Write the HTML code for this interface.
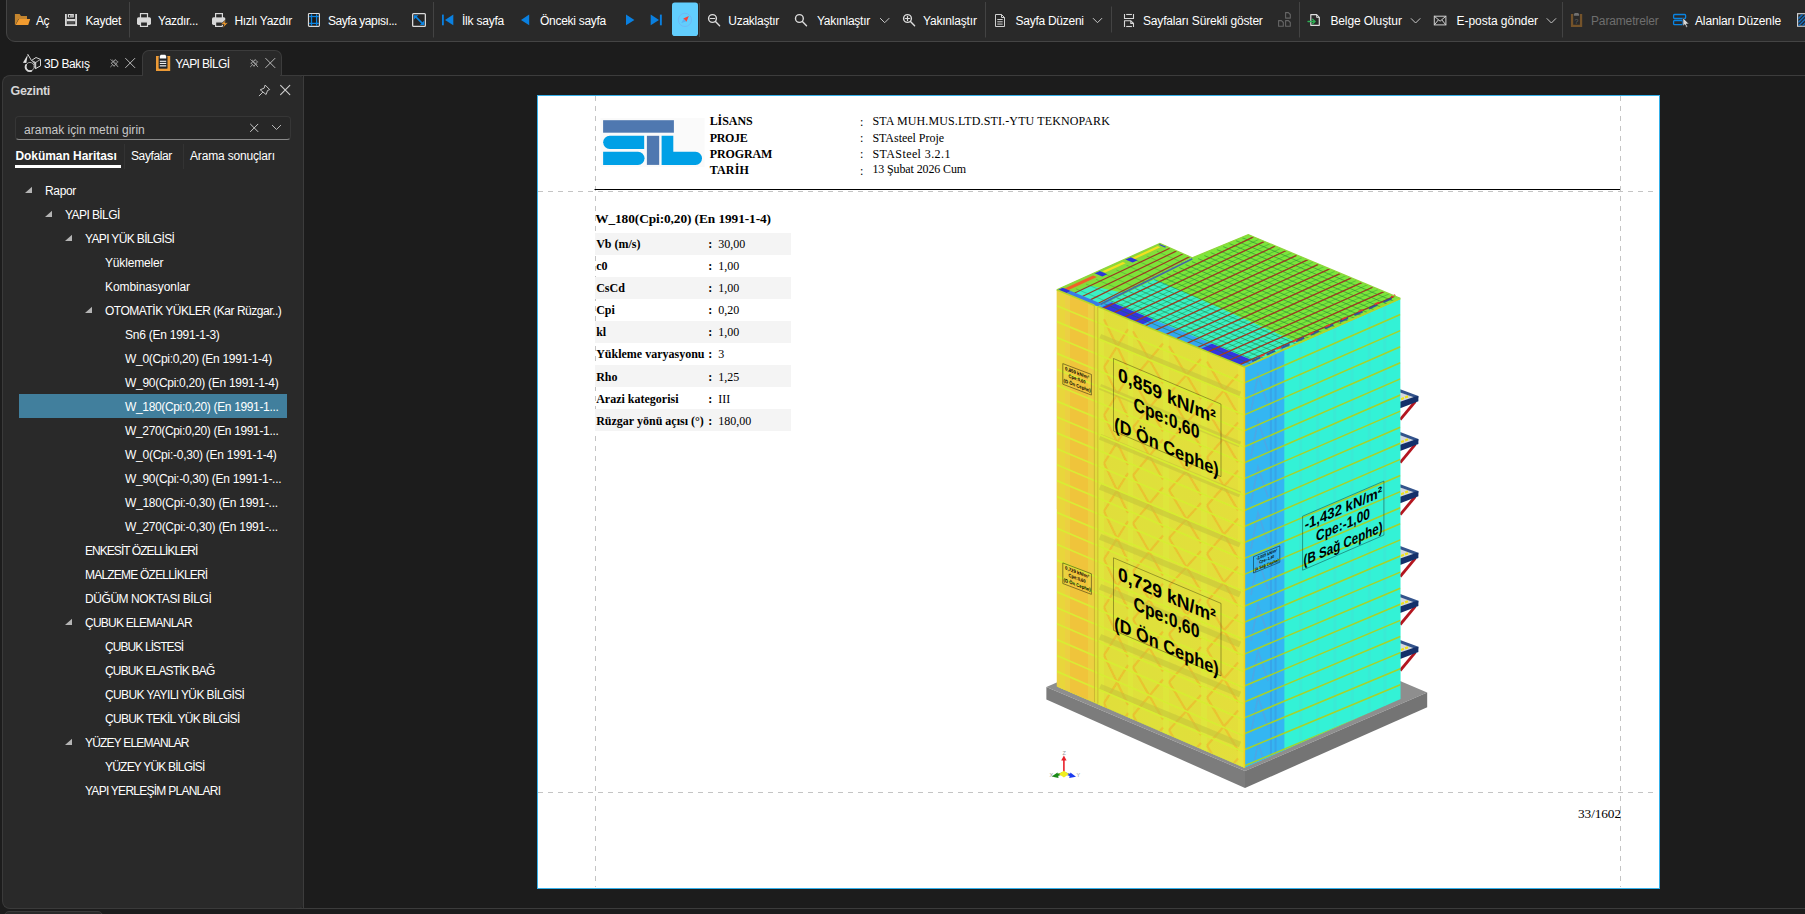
<!DOCTYPE html>
<html lang="tr"><head><meta charset="utf-8"><title>YAPI BİLGİ</title>
<style>
html,body{margin:0;padding:0;}
body{width:1805px;height:914px;overflow:hidden;background:#1c1c1c;position:relative;font-family:"Liberation Sans",sans-serif;}
.t{position:absolute;white-space:pre;}
.f{font-family:"Liberation Sans",sans-serif;}
.r{font-family:"Liberation Serif",serif;}
.a{position:absolute;}
svg{position:absolute;overflow:visible;}

</style></head>
<body>
<!-- toolbar -->
<div class="a" style="left:6px;top:-10px;width:1830px;height:49.8px;background:#292929;border:1px solid #444;border-radius:9px;"></div>
<!-- toolbar separators -->
<!-- tab strip -->
<div class="a" style="left:142px;top:50px;width:138px;height:27px;background:#292929;border:1px solid #3c3c3c;border-bottom:none;border-radius:7px 7px 0 0;"></div>
<!-- doc area top line -->
<div class="a" style="left:281px;top:75px;width:1530px;height:1px;background:#3c3c3c;"></div>
<!-- left panel -->
<div class="a" style="left:2px;top:75px;width:300.5px;height:834px;background:#292929;border:1px solid #3a3a3a;border-right-color:#292929;border-radius:8px 4px 4px 8px;box-sizing:border-box;"></div>
<div class="a tabcover" style="left:143px;top:74px;width:137px;height:3px;background:#292929;"></div>
<div class="a" style="left:303px;top:75px;width:1px;height:834px;background:#3c3c3c;"></div>
<!-- bottom line -->
<div class="a" style="left:296px;top:908px;width:1510px;height:1px;background:#3c3c3c;"></div>
<div class="a" style="left:4px;top:911px;width:98.5px;height:10px;background:#292929;border:1px solid #3a3a3a;border-radius:5px 5px 0 0;box-sizing:border-box;"></div>
<!-- search box -->
<div class="a" style="left:15px;top:116px;width:276px;height:24px;background:#272727;border:1px solid #363636;border-bottom-color:#8a8a8a;border-radius:4px;box-sizing:border-box;"></div>
<!-- panel tabs underline -->
<div class="a" style="left:15px;top:165px;width:106px;height:3px;background:#fff;"></div>
<div class="a" style="left:124px;top:144px;width:1px;height:25px;background:#333;"></div>
<div class="a" style="left:183px;top:144px;width:1px;height:25px;background:#333;"></div>
<!-- selected row -->
<div class="a" style="left:19px;top:394px;width:268px;height:24px;background:#417f9d;"></div>
<!-- page -->
<div class="a" style="left:537px;top:94.5px;width:1122.5px;height:794.5px;background:#fff;border:1px solid #35b0ea;box-sizing:border-box;"></div>
<!-- page guides -->
<svg class="a" style="left:0;top:0;" width="1805" height="914">
  <g stroke="#c4c4c4" stroke-width="1" stroke-dasharray="5 5" fill="none">
    <line x1="595.5" y1="96" x2="595.5" y2="887"/>
    <line x1="1620.5" y1="96" x2="1620.5" y2="887"/>
    <line x1="538" y1="191.5" x2="1658" y2="191.5"/>
    <line x1="538" y1="792.5" x2="1658" y2="792.5"/>
  </g>
  <line x1="594.5" y1="189.5" x2="1620" y2="189.5" stroke="#000" stroke-width="1.15"/>
  <!-- logo -->
  <rect x="600.5" y="118" width="104" height="49" fill="#fafafa"/>
  <rect x="603.1" y="120.2" width="70.8" height="12.5" fill="#4f78b0"/>
  <path d="M609.7 135.8H644.2V148.9H609.7A6.55 6.55 0 0 1 609.7 135.8Z" fill="#00a0e6"/>
  <path d="M603.1 151.8H638A6.55 6.55 0 0 1 638 164.9H603.1Z" fill="#00a0e6"/>
  <rect x="646.9" y="135.8" width="12.3" height="29.1" fill="#4f78b0"/>
  <path d="M661.6 135.8H673.3V151.8H695.5A6.55 6.55 0 0 1 695.5 164.9H661.6Z" fill="#00a0e6"/>
</svg>
<!-- table stripes -->
<div class="a" style="left:595px;top:232.9px;width:196px;height:21.8px;background:#f4f4f4;"></div>
<div class="a" style="left:595px;top:277.0px;width:196px;height:21.8px;background:#f4f4f4;"></div>
<div class="a" style="left:595px;top:321.0px;width:196px;height:21.8px;background:#f4f4f4;"></div>
<div class="a" style="left:595px;top:365.1px;width:196px;height:21.8px;background:#f4f4f4;"></div>
<div class="a" style="left:595px;top:409.1px;width:196px;height:21.8px;background:#f4f4f4;"></div>

<svg class="a" style="left:0;top:0;" width="1805" height="914">
<defs><linearGradient id="gl" x1="0" x2="1" y1="0" y2="0"><stop offset="0" stop-color="#e2dc3f"/><stop offset="0.5" stop-color="#dfe03c"/><stop offset="1" stop-color="#e4de3e"/></linearGradient><clipPath id="cl"><polygon points="1056.8,289.8 1244.4,367.0 1244.4,767.8 1056.9,686.4"/></clipPath><clipPath id="cr"><polygon points="1244.4,367.0 1400.3,298.4 1400.6,699.0 1244.4,767.8"/></clipPath><clipPath id="croof"><polygon points="1097.8,306.6 1192.3,257.8 1248.3,234.6 1400.3,298.4 1244.4,367.0"/></clipPath><clipPath id="croof2"><polygon points="1056.8,289.8 1159.9,243.4 1192.3,257.8 1097.8,306.6"/></clipPath></defs>
<polygon points="1046.4,686.9 1245.0,771.0 1427.2,692.6 1228.0,608.0" fill="#8e8e8e"/>
<polygon points="1046.4,686.9 1245.0,771.0 1245.0,788.0 1046.4,699.6" fill="#7c7c7c"/>
<polygon points="1245.0,771.0 1427.2,692.6 1427.2,707.2 1245.0,788.0" fill="#747474"/>
<path d="M1415.3 401.5L1400.2 419.7" stroke="#b3161f" stroke-width="2.8"/>
<polygon points="1400.2,392.2 1414.5,397.2 1400.2,402.2" fill="#d4d8e0"/>
<path d="M1401 399.2L1409.5 395.8" stroke="#efe11c" stroke-width="2.2" stroke-dasharray="3.2 1.2"/>
<polygon points="1400.2,389.2 1418.4,396.0 1418.4,397.8 1414.5,397.6 1400.2,392.4" fill="#34548c"/>
<polygon points="1400.2,401.8 1414.5,396.8 1418.4,396.0 1418.4,401.2 1400.2,408.2" fill="#14306a"/>
<path d="M1415.3 444.4L1400.2 462.6" stroke="#b3161f" stroke-width="2.8"/>
<polygon points="1400.2,435.1 1414.5,440.1 1400.2,445.1" fill="#d4d8e0"/>
<path d="M1401 442.1L1409.5 438.7" stroke="#efe11c" stroke-width="2.2" stroke-dasharray="3.2 1.2"/>
<polygon points="1400.2,432.1 1418.4,438.9 1418.4,440.7 1414.5,440.5 1400.2,435.3" fill="#34548c"/>
<polygon points="1400.2,444.7 1414.5,439.7 1418.4,438.9 1418.4,444.1 1400.2,451.1" fill="#14306a"/>
<path d="M1415.3 496.5L1400.2 514.7" stroke="#b3161f" stroke-width="2.8"/>
<polygon points="1400.2,487.2 1414.5,492.2 1400.2,497.2" fill="#d4d8e0"/>
<path d="M1401 494.2L1409.5 490.8" stroke="#efe11c" stroke-width="2.2" stroke-dasharray="3.2 1.2"/>
<polygon points="1400.2,484.2 1418.4,491.0 1418.4,492.8 1414.5,492.6 1400.2,487.4" fill="#34548c"/>
<polygon points="1400.2,496.8 1414.5,491.8 1418.4,491.0 1418.4,496.2 1400.2,503.2" fill="#14306a"/>
<path d="M1415.3 558.3L1400.2 576.5" stroke="#b3161f" stroke-width="2.8"/>
<polygon points="1400.2,549.0 1414.5,554.0 1400.2,559.0" fill="#d4d8e0"/>
<path d="M1401 556.0L1409.5 552.6" stroke="#efe11c" stroke-width="2.2" stroke-dasharray="3.2 1.2"/>
<polygon points="1400.2,546.0 1418.4,552.8 1418.4,554.6 1414.5,554.4 1400.2,549.2" fill="#34548c"/>
<polygon points="1400.2,558.6 1414.5,553.6 1418.4,552.8 1418.4,558.0 1400.2,565.0" fill="#14306a"/>
<path d="M1415.3 606.3L1400.2 624.5" stroke="#b3161f" stroke-width="2.8"/>
<polygon points="1400.2,597.0 1414.5,602.0 1400.2,607.0" fill="#d4d8e0"/>
<path d="M1401 604.0L1409.5 600.6" stroke="#efe11c" stroke-width="2.2" stroke-dasharray="3.2 1.2"/>
<polygon points="1400.2,594.0 1418.4,600.8 1418.4,602.6 1414.5,602.4 1400.2,597.2" fill="#34548c"/>
<polygon points="1400.2,606.6 1414.5,601.6 1418.4,600.8 1418.4,606.0 1400.2,613.0" fill="#14306a"/>
<path d="M1415.3 652.3L1400.2 670.5" stroke="#b3161f" stroke-width="2.8"/>
<polygon points="1400.2,643.0 1414.5,648.0 1400.2,653.0" fill="#d4d8e0"/>
<path d="M1401 650.0L1409.5 646.6" stroke="#efe11c" stroke-width="2.2" stroke-dasharray="3.2 1.2"/>
<polygon points="1400.2,640.0 1418.4,646.8 1418.4,648.6 1414.5,648.4 1400.2,643.2" fill="#34548c"/>
<polygon points="1400.2,652.6 1414.5,647.6 1418.4,646.8 1418.4,652.0 1400.2,659.0" fill="#14306a"/>
<polygon points="1056.8,289.8 1244.4,367.0 1244.4,767.8 1056.9,686.4" fill="url(#gl)"/>
<polygon points="1056.8,289.8 1094.3,305.2 1094.5,702.2 1056.9,686.4" fill="#ecd046"/>
<g clip-path="url(#cl)">
<rect x="1060" y="280" width="5" height="500" fill="#e8d83c" opacity="0.75"/>
<rect x="1098" y="280" width="6" height="500" fill="#dde843" opacity="0.75"/>
<rect x="1128" y="280" width="5" height="500" fill="#dde843" opacity="0.75"/>
<rect x="1163" y="280" width="6" height="500" fill="#dde843" opacity="0.75"/>
<rect x="1201" y="280" width="6" height="500" fill="#dde843" opacity="0.75"/>
<rect x="1238" y="280" width="6" height="500" fill="#e6e63c" opacity="0.75"/>
<rect x="1070" y="280" width="18" height="500" fill="#f2c23c" opacity="0.75"/>
<path d="M1104 319.2L1128 369.1M1128 329.1L1104 367.2" stroke="#f0b030" stroke-width="2.2" opacity="0.55" fill="none"/>
<path d="M1104 367.2L1128 417.1M1128 377.1L1104 415.2" stroke="#f0b030" stroke-width="2.2" opacity="0.55" fill="none"/>
<path d="M1104 415.2L1128 465.1M1128 425.1L1104 463.2" stroke="#f0b030" stroke-width="2.2" opacity="0.55" fill="none"/>
<path d="M1104 463.2L1128 513.1M1128 473.1L1104 511.2" stroke="#f0b030" stroke-width="2.2" opacity="0.55" fill="none"/>
<path d="M1104 511.2L1128 561.1M1128 521.1L1104 559.2" stroke="#f0b030" stroke-width="2.2" opacity="0.55" fill="none"/>
<path d="M1104 559.2L1128 609.1M1128 569.1L1104 607.2" stroke="#f0b030" stroke-width="2.2" opacity="0.55" fill="none"/>
<path d="M1104 607.2L1128 657.1M1128 617.1L1104 655.2" stroke="#f0b030" stroke-width="2.2" opacity="0.55" fill="none"/>
<path d="M1104 655.2L1128 705.1M1128 665.1L1104 703.2" stroke="#f0b030" stroke-width="2.2" opacity="0.55" fill="none"/>
<path d="M1104 703.2L1128 753.1M1128 713.1L1104 751.2" stroke="#f0b030" stroke-width="2.2" opacity="0.55" fill="none"/>
<path d="M1133 331.2L1163 383.5M1163 343.5L1133 379.2" stroke="#f0b030" stroke-width="2.2" opacity="0.55" fill="none"/>
<path d="M1133 379.2L1163 431.5M1163 391.5L1133 427.2" stroke="#f0b030" stroke-width="2.2" opacity="0.55" fill="none"/>
<path d="M1133 427.2L1163 479.5M1163 439.5L1133 475.2" stroke="#f0b030" stroke-width="2.2" opacity="0.55" fill="none"/>
<path d="M1133 475.2L1163 527.5M1163 487.5L1133 523.2" stroke="#f0b030" stroke-width="2.2" opacity="0.55" fill="none"/>
<path d="M1133 523.2L1163 575.5M1163 535.5L1133 571.2" stroke="#f0b030" stroke-width="2.2" opacity="0.55" fill="none"/>
<path d="M1133 571.2L1163 623.5M1163 583.5L1133 619.2" stroke="#f0b030" stroke-width="2.2" opacity="0.55" fill="none"/>
<path d="M1133 619.2L1163 671.5M1163 631.5L1133 667.2" stroke="#f0b030" stroke-width="2.2" opacity="0.55" fill="none"/>
<path d="M1133 667.2L1163 719.5M1163 679.5L1133 715.2" stroke="#f0b030" stroke-width="2.2" opacity="0.55" fill="none"/>
<path d="M1133 715.2L1163 767.5M1163 727.5L1133 763.2" stroke="#f0b030" stroke-width="2.2" opacity="0.55" fill="none"/>
<path d="M1169 346.0L1201 399.1M1201 359.1L1169 394.0" stroke="#f0b030" stroke-width="2.2" opacity="0.55" fill="none"/>
<path d="M1169 394.0L1201 447.1M1201 407.1L1169 442.0" stroke="#f0b030" stroke-width="2.2" opacity="0.55" fill="none"/>
<path d="M1169 442.0L1201 495.1M1201 455.1L1169 490.0" stroke="#f0b030" stroke-width="2.2" opacity="0.55" fill="none"/>
<path d="M1169 490.0L1201 543.1M1201 503.1L1169 538.0" stroke="#f0b030" stroke-width="2.2" opacity="0.55" fill="none"/>
<path d="M1169 538.0L1201 591.1M1201 551.1L1169 586.0" stroke="#f0b030" stroke-width="2.2" opacity="0.55" fill="none"/>
<path d="M1169 586.0L1201 639.1M1201 599.1L1169 634.0" stroke="#f0b030" stroke-width="2.2" opacity="0.55" fill="none"/>
<path d="M1169 634.0L1201 687.1M1201 647.1L1169 682.0" stroke="#f0b030" stroke-width="2.2" opacity="0.55" fill="none"/>
<path d="M1169 682.0L1201 735.1M1201 695.1L1169 730.0" stroke="#f0b030" stroke-width="2.2" opacity="0.55" fill="none"/>
<path d="M1169 730.0L1201 783.1M1201 743.1L1169 778.0" stroke="#f0b030" stroke-width="2.2" opacity="0.55" fill="none"/>
<path d="M1207 361.6L1238 414.4M1238 374.4L1207 409.6" stroke="#f0b030" stroke-width="2.2" opacity="0.55" fill="none"/>
<path d="M1207 409.6L1238 462.4M1238 422.4L1207 457.6" stroke="#f0b030" stroke-width="2.2" opacity="0.55" fill="none"/>
<path d="M1207 457.6L1238 510.4M1238 470.4L1207 505.6" stroke="#f0b030" stroke-width="2.2" opacity="0.55" fill="none"/>
<path d="M1207 505.6L1238 558.4M1238 518.4L1207 553.6" stroke="#f0b030" stroke-width="2.2" opacity="0.55" fill="none"/>
<path d="M1207 553.6L1238 606.4M1238 566.4L1207 601.6" stroke="#f0b030" stroke-width="2.2" opacity="0.55" fill="none"/>
<path d="M1207 601.6L1238 654.4M1238 614.4L1207 649.6" stroke="#f0b030" stroke-width="2.2" opacity="0.55" fill="none"/>
<path d="M1207 649.6L1238 702.4M1238 662.4L1207 697.6" stroke="#f0b030" stroke-width="2.2" opacity="0.55" fill="none"/>
<path d="M1207 697.6L1238 750.4M1238 710.4L1207 745.6" stroke="#f0b030" stroke-width="2.2" opacity="0.55" fill="none"/>
<path d="M1207 745.6L1238 798.4M1238 758.4L1207 793.6" stroke="#f0b030" stroke-width="2.2" opacity="0.55" fill="none"/>
<path d="M1100 336.8L1240 394.4" stroke="#c4c23a" stroke-width="6" opacity="0.55"/>
<path d="M1100 386.8L1240 444.4" stroke="#c4c23a" stroke-width="6" opacity="0.55"/>
<path d="M1100 436.8L1240 494.4" stroke="#c4c23a" stroke-width="6" opacity="0.55"/>
<path d="M1100 486.8L1240 544.4" stroke="#c4c23a" stroke-width="6" opacity="0.55"/>
<path d="M1100 536.8L1240 594.4" stroke="#c4c23a" stroke-width="6" opacity="0.55"/>
<path d="M1100 586.8L1240 644.4" stroke="#c4c23a" stroke-width="6" opacity="0.55"/>
<path d="M1100 636.8L1240 694.4" stroke="#c4c23a" stroke-width="6" opacity="0.55"/>
<path d="M1100 686.8L1240 744.4" stroke="#c4c23a" stroke-width="6" opacity="0.55"/>
<path d="M1056.8 289.8L1244.4 367.0" stroke="#d8ee34" stroke-width="1.7" opacity="0.95"/>
<path d="M1056.8 305.7L1244.4 383.1" stroke="#d8ee34" stroke-width="1.7" opacity="0.95"/>
<path d="M1056.8 321.6L1244.4 399.1" stroke="#d8ee34" stroke-width="1.7" opacity="0.95"/>
<path d="M1056.8 337.5L1244.4 415.1" stroke="#d8ee34" stroke-width="1.7" opacity="0.95"/>
<path d="M1056.8 353.4L1244.4 431.2" stroke="#d8ee34" stroke-width="1.7" opacity="0.95"/>
<path d="M1056.8 369.3L1244.4 447.2" stroke="#d8ee34" stroke-width="1.7" opacity="0.95"/>
<path d="M1056.8 385.2L1244.4 463.3" stroke="#d8ee34" stroke-width="1.7" opacity="0.95"/>
<path d="M1056.8 401.1L1244.4 479.4" stroke="#d8ee34" stroke-width="1.7" opacity="0.95"/>
<path d="M1056.8 417.0L1244.4 495.4" stroke="#d8ee34" stroke-width="1.7" opacity="0.95"/>
<path d="M1056.8 432.9L1244.4 511.5" stroke="#d8ee34" stroke-width="1.7" opacity="0.95"/>
<path d="M1056.8 448.8L1244.4 527.5" stroke="#d8ee34" stroke-width="1.7" opacity="0.95"/>
<path d="M1056.8 464.7L1244.4 543.5" stroke="#d8ee34" stroke-width="1.7" opacity="0.95"/>
<path d="M1056.8 480.6L1244.4 559.6" stroke="#d8ee34" stroke-width="1.7" opacity="0.95"/>
<path d="M1056.8 496.5L1244.4 575.6" stroke="#d8ee34" stroke-width="1.7" opacity="0.95"/>
<path d="M1056.8 512.4L1244.4 591.7" stroke="#d8ee34" stroke-width="1.7" opacity="0.95"/>
<path d="M1056.8 528.3L1244.4 607.8" stroke="#d8ee34" stroke-width="1.7" opacity="0.95"/>
<path d="M1056.8 544.2L1244.4 623.8" stroke="#d8ee34" stroke-width="1.7" opacity="0.95"/>
<path d="M1056.8 560.1L1244.4 639.9" stroke="#d8ee34" stroke-width="1.7" opacity="0.95"/>
<path d="M1056.8 576.0L1244.4 655.9" stroke="#d8ee34" stroke-width="1.7" opacity="0.95"/>
<path d="M1056.8 591.9L1244.4 672.0" stroke="#d8ee34" stroke-width="1.7" opacity="0.95"/>
<path d="M1056.8 607.8L1244.4 688.0" stroke="#d8ee34" stroke-width="1.7" opacity="0.95"/>
<path d="M1056.8 623.7L1244.4 704.0" stroke="#d8ee34" stroke-width="1.7" opacity="0.95"/>
<path d="M1056.8 639.6L1244.4 720.1" stroke="#d8ee34" stroke-width="1.7" opacity="0.95"/>
<path d="M1056.8 655.5L1244.4 736.2" stroke="#d8ee34" stroke-width="1.7" opacity="0.95"/>
<path d="M1056.8 671.4L1244.4 752.2" stroke="#d8ee34" stroke-width="1.7" opacity="0.95"/>
<path d="M1056.8 687.3L1244.4 768.2" stroke="#d8ee34" stroke-width="1.7" opacity="0.95"/>
</g>
<path d="M1094.3 305.2L1094.5 702.2M1097.8 306.6L1097.9 703.6" stroke="#c8b030" stroke-width="0.8"/>
<polygon points="1244.4,367.0 1400.3,298.4 1400.6,699.0 1244.4,767.8" fill="#33f2d6"/>
<polygon points="1244.4,367.0 1284.3,349.4 1284.4,750.2 1244.4,767.8" fill="#34b6f2"/>
<g clip-path="url(#cr)">
<path d="M1270.9 355.3L1271.0 756.1" stroke="#3a9fe6" stroke-width="2" opacity="0.7"/>
<path d="M1275.6 353.3L1275.6 754.0" stroke="#3a9fe6" stroke-width="2" opacity="0.7"/>
<path d="M1300.5 342.3L1300.6 743.0" stroke="#3fe6d4" stroke-width="3" opacity="0.6"/>
<path d="M1317.7 334.8L1317.8 735.5" stroke="#3fe6d4" stroke-width="3" opacity="0.6"/>
<path d="M1334.8 327.2L1335.0 727.9" stroke="#3fe6d4" stroke-width="3" opacity="0.6"/>
<path d="M1352.0 319.7L1352.2 720.3" stroke="#3fe6d4" stroke-width="3" opacity="0.6"/>
<path d="M1369.1 312.1L1369.4 712.8" stroke="#3fe6d4" stroke-width="3" opacity="0.6"/>
<path d="M1384.7 305.3L1385.0 705.9" stroke="#3fe6d4" stroke-width="3" opacity="0.6"/>
<path d="M1251 411.0L1258 375.0L1268 405.0" stroke="#5a9fe0" stroke-width="1.6" opacity="0.6" fill="none"/>
<path d="M1251 457.0L1258 421.0L1268 451.0" stroke="#5a9fe0" stroke-width="1.6" opacity="0.6" fill="none"/>
<path d="M1251 503.0L1258 467.0L1268 497.0" stroke="#5a9fe0" stroke-width="1.6" opacity="0.6" fill="none"/>
<path d="M1251 549.0L1258 513.0L1268 543.0" stroke="#5a9fe0" stroke-width="1.6" opacity="0.6" fill="none"/>
<path d="M1251 595.0L1258 559.0L1268 589.0" stroke="#5a9fe0" stroke-width="1.6" opacity="0.6" fill="none"/>
<path d="M1251 641.0L1258 605.0L1268 635.0" stroke="#5a9fe0" stroke-width="1.6" opacity="0.6" fill="none"/>
<path d="M1251 687.0L1258 651.0L1268 681.0" stroke="#5a9fe0" stroke-width="1.6" opacity="0.6" fill="none"/>
<path d="M1251 733.0L1258 697.0L1268 727.0" stroke="#5a9fe0" stroke-width="1.6" opacity="0.6" fill="none"/>
<path d="M1251 779.0L1258 743.0L1268 773.0" stroke="#5a9fe0" stroke-width="1.6" opacity="0.6" fill="none"/>
<path d="M1244.4 367.0L1400.3 298.4" stroke="#a6d22a" stroke-width="1.5"/>
<path d="M1244.4 382.9L1400.3 314.5" stroke="#a6d22a" stroke-width="1.5"/>
<path d="M1244.4 398.9L1400.3 330.6" stroke="#a6d22a" stroke-width="1.5"/>
<path d="M1244.4 414.9L1400.3 346.7" stroke="#a6d22a" stroke-width="1.5"/>
<path d="M1244.4 430.8L1400.3 362.8" stroke="#a6d22a" stroke-width="1.5"/>
<path d="M1244.4 446.8L1400.3 378.9" stroke="#a6d22a" stroke-width="1.5"/>
<path d="M1244.4 462.7L1400.3 395.0" stroke="#a6d22a" stroke-width="1.5"/>
<path d="M1244.4 478.6L1400.3 411.1" stroke="#a6d22a" stroke-width="1.5"/>
<path d="M1244.4 494.6L1400.3 427.2" stroke="#a6d22a" stroke-width="1.5"/>
<path d="M1244.4 510.5L1400.3 443.3" stroke="#a6d22a" stroke-width="1.5"/>
<path d="M1244.4 526.5L1400.3 459.4" stroke="#a6d22a" stroke-width="1.5"/>
<path d="M1244.4 542.5L1400.3 475.5" stroke="#a6d22a" stroke-width="1.5"/>
<path d="M1244.4 558.4L1400.3 491.6" stroke="#a6d22a" stroke-width="1.5"/>
<path d="M1244.4 574.4L1400.3 507.7" stroke="#a6d22a" stroke-width="1.5"/>
<path d="M1244.4 590.3L1400.3 523.8" stroke="#a6d22a" stroke-width="1.5"/>
<path d="M1244.4 606.2L1400.3 539.9" stroke="#a6d22a" stroke-width="1.5"/>
<path d="M1244.4 622.2L1400.3 556.0" stroke="#a6d22a" stroke-width="1.5"/>
<path d="M1244.4 638.1L1400.3 572.1" stroke="#a6d22a" stroke-width="1.5"/>
<path d="M1244.4 654.1L1400.3 588.2" stroke="#a6d22a" stroke-width="1.5"/>
<path d="M1244.4 670.0L1400.3 604.3" stroke="#a6d22a" stroke-width="1.5"/>
<path d="M1244.4 686.0L1400.3 620.4" stroke="#a6d22a" stroke-width="1.5"/>
<path d="M1244.4 702.0L1400.3 636.5" stroke="#a6d22a" stroke-width="1.5"/>
<path d="M1244.4 717.9L1400.3 652.6" stroke="#a6d22a" stroke-width="1.5"/>
<path d="M1244.4 733.8L1400.3 668.7" stroke="#a6d22a" stroke-width="1.5"/>
<path d="M1244.4 749.8L1400.3 684.8" stroke="#a6d22a" stroke-width="1.5"/>
<path d="M1244.4 765.8L1400.3 700.9" stroke="#a6d22a" stroke-width="1.5"/>
</g>
<path d="M1244.4 367.0L1244.4 767.8" stroke="#f0d020" stroke-width="1.6"/>
<polygon points="1056.8,289.8 1159.9,243.4 1192.3,257.8 1097.8,306.6" fill="#7fe23a"/>
<polygon points="1097.8,306.6 1192.3,257.8 1248.3,234.6 1400.3,298.4 1244.4,367.0" fill="#7ee63c"/>
<g clip-path="url(#croof)">
<polygon points="1097.8,306.6 1244.4,367.0 1299.0,343.0 1155.0,279.2" fill="#3cf0c4"/>
<polygon points="1097.8,306.6 1244.4,367.0 1256.1,361.9 1109.1,301.2" fill="#35a6f0"/>
<polygon points="1100.7,307.8 1141.8,324.7 1153.2,319.4 1112.0,302.4" fill="#3434e0"/>
<polygon points="1200.4,348.9 1240.0,365.2 1251.7,360.0 1212.0,343.7" fill="#3434e0"/>
<path d="M1104.1 303.6L1250.9 364.1" stroke="#1f7a3a" stroke-width="0.7" opacity="0.75"/>
<path d="M1110.3 300.6L1257.4 361.3" stroke="#1f7a3a" stroke-width="0.7" opacity="0.75"/>
<path d="M1116.6 297.6L1263.9 358.4" stroke="#1f7a3a" stroke-width="0.7" opacity="0.75"/>
<path d="M1122.9 294.6L1270.4 355.6" stroke="#1f7a3a" stroke-width="0.7" opacity="0.75"/>
<path d="M1129.2 291.6L1276.9 352.7" stroke="#1f7a3a" stroke-width="0.7" opacity="0.75"/>
<path d="M1135.4 288.6L1283.4 349.9" stroke="#1f7a3a" stroke-width="0.7" opacity="0.75"/>
<path d="M1141.7 285.6L1289.9 347.0" stroke="#1f7a3a" stroke-width="0.7" opacity="0.75"/>
<path d="M1148.0 282.6L1296.4 344.1" stroke="#1f7a3a" stroke-width="0.7" opacity="0.75"/>
<path d="M1154.2 279.6L1302.9 341.3" stroke="#1f7a3a" stroke-width="0.7" opacity="0.75"/>
<path d="M1160.5 276.6L1309.4 338.4" stroke="#1f7a3a" stroke-width="0.7" opacity="0.75"/>
<path d="M1166.8 273.6L1315.9 335.6" stroke="#1f7a3a" stroke-width="0.7" opacity="0.75"/>
<path d="M1173.0 270.6L1322.3 332.7" stroke="#1f7a3a" stroke-width="0.7" opacity="0.75"/>
<path d="M1179.3 267.6L1328.8 329.8" stroke="#1f7a3a" stroke-width="0.7" opacity="0.75"/>
<path d="M1185.6 264.6L1335.3 327.0" stroke="#1f7a3a" stroke-width="0.7" opacity="0.75"/>
<path d="M1191.9 261.6L1341.8 324.1" stroke="#1f7a3a" stroke-width="0.7" opacity="0.75"/>
<path d="M1198.1 258.6L1348.3 321.3" stroke="#1f7a3a" stroke-width="0.7" opacity="0.75"/>
<path d="M1204.4 255.6L1354.8 318.4" stroke="#1f7a3a" stroke-width="0.7" opacity="0.75"/>
<path d="M1210.7 252.6L1361.3 315.5" stroke="#1f7a3a" stroke-width="0.7" opacity="0.75"/>
<path d="M1216.9 249.6L1367.8 312.7" stroke="#1f7a3a" stroke-width="0.7" opacity="0.75"/>
<path d="M1223.2 246.6L1374.3 309.8" stroke="#1f7a3a" stroke-width="0.7" opacity="0.75"/>
<path d="M1229.5 243.6L1380.8 307.0" stroke="#1f7a3a" stroke-width="0.7" opacity="0.75"/>
<path d="M1235.8 240.6L1387.3 304.1" stroke="#1f7a3a" stroke-width="0.7" opacity="0.75"/>
<path d="M1242.0 237.6L1393.8 301.3" stroke="#1f7a3a" stroke-width="0.7" opacity="0.75"/>
<path d="M1115.1 303.0L1253.7 236.9" stroke="#1f7a3a" stroke-width="0.6" opacity="0.6"/>
<path d="M1120.3 305.2L1259.2 239.2" stroke="#1f7a3a" stroke-width="0.6" opacity="0.6"/>
<path d="M1125.6 307.3L1264.6 241.4" stroke="#1f7a3a" stroke-width="0.6" opacity="0.6"/>
<path d="M1130.8 309.5L1270.0 243.7" stroke="#1f7a3a" stroke-width="0.6" opacity="0.6"/>
<path d="M1136.1 311.7L1275.4 246.0" stroke="#1f7a3a" stroke-width="0.6" opacity="0.6"/>
<path d="M1141.3 313.8L1280.9 248.3" stroke="#1f7a3a" stroke-width="0.6" opacity="0.6"/>
<path d="M1146.6 316.0L1286.3 250.5" stroke="#1f7a3a" stroke-width="0.6" opacity="0.6"/>
<path d="M1151.8 318.2L1291.7 252.8" stroke="#1f7a3a" stroke-width="0.6" opacity="0.6"/>
<path d="M1157.1 320.3L1297.2 255.1" stroke="#1f7a3a" stroke-width="0.6" opacity="0.6"/>
<path d="M1162.4 322.5L1302.6 257.4" stroke="#1f7a3a" stroke-width="0.6" opacity="0.6"/>
<path d="M1167.6 324.7L1308.0 259.7" stroke="#1f7a3a" stroke-width="0.6" opacity="0.6"/>
<path d="M1172.9 326.8L1313.4 261.9" stroke="#1f7a3a" stroke-width="0.6" opacity="0.6"/>
<path d="M1178.1 329.0L1318.9 264.2" stroke="#1f7a3a" stroke-width="0.6" opacity="0.6"/>
<path d="M1183.4 331.2L1324.3 266.5" stroke="#1f7a3a" stroke-width="0.6" opacity="0.6"/>
<path d="M1188.6 333.3L1329.7 268.8" stroke="#1f7a3a" stroke-width="0.6" opacity="0.6"/>
<path d="M1193.9 335.5L1335.2 271.1" stroke="#1f7a3a" stroke-width="0.6" opacity="0.6"/>
<path d="M1199.1 337.7L1340.6 273.3" stroke="#1f7a3a" stroke-width="0.6" opacity="0.6"/>
<path d="M1204.4 339.8L1346.0 275.6" stroke="#1f7a3a" stroke-width="0.6" opacity="0.6"/>
<path d="M1209.6 342.0L1351.4 277.9" stroke="#1f7a3a" stroke-width="0.6" opacity="0.6"/>
<path d="M1214.9 344.2L1356.9 280.2" stroke="#1f7a3a" stroke-width="0.6" opacity="0.6"/>
<path d="M1220.1 346.3L1362.3 282.4" stroke="#1f7a3a" stroke-width="0.6" opacity="0.6"/>
<path d="M1225.4 348.5L1367.7 284.7" stroke="#1f7a3a" stroke-width="0.6" opacity="0.6"/>
<path d="M1230.6 350.7L1373.2 287.0" stroke="#1f7a3a" stroke-width="0.6" opacity="0.6"/>
<path d="M1235.9 352.8L1378.6 289.3" stroke="#1f7a3a" stroke-width="0.6" opacity="0.6"/>
<path d="M1241.1 355.0L1384.0 291.6" stroke="#1f7a3a" stroke-width="0.6" opacity="0.6"/>
<path d="M1246.4 357.2L1389.4 293.8" stroke="#1f7a3a" stroke-width="0.6" opacity="0.6"/>
<path d="M1251.6 359.3L1394.9 296.1" stroke="#1f7a3a" stroke-width="0.6" opacity="0.6"/>
<path d="M1102.9 308.7L1253.6 236.8" stroke="#9c3a22" stroke-width="1.3"/>
<path d="M1113.4 313.0L1264.5 241.4" stroke="#9c3a22" stroke-width="1.3"/>
<path d="M1123.9 317.4L1275.4 246.0" stroke="#9c3a22" stroke-width="1.3"/>
<path d="M1134.4 321.7L1286.2 250.5" stroke="#9c3a22" stroke-width="1.3"/>
<path d="M1144.9 326.0L1297.1 255.1" stroke="#9c3a22" stroke-width="1.3"/>
<path d="M1155.3 330.3L1308.0 259.6" stroke="#9c3a22" stroke-width="1.3"/>
<path d="M1165.8 334.6L1318.8 264.2" stroke="#9c3a22" stroke-width="1.3"/>
<path d="M1176.3 338.9L1329.7 268.8" stroke="#9c3a22" stroke-width="1.3"/>
<path d="M1186.8 343.3L1340.6 273.3" stroke="#9c3a22" stroke-width="1.3"/>
<path d="M1197.3 347.6L1351.4 277.9" stroke="#9c3a22" stroke-width="1.3"/>
<path d="M1207.8 351.9L1362.3 282.4" stroke="#9c3a22" stroke-width="1.3"/>
<path d="M1218.2 356.2L1373.2 287.0" stroke="#9c3a22" stroke-width="1.3"/>
<path d="M1228.7 360.5L1384.0 291.6" stroke="#9c3a22" stroke-width="1.3"/>
<path d="M1239.2 364.9L1394.9 296.1" stroke="#9c3a22" stroke-width="1.3"/>
</g>
<path d="M1252.2 361.1L1397.3 295.9" stroke="#2a4aa0" stroke-width="2" stroke-dasharray="9 7" opacity="0.9"/>
<path d="M1260.0 356.6L1395.3 294.9" stroke="#e03a2a" stroke-width="1.6" stroke-dasharray="5 13"/>
<g clip-path="url(#croof2)">
<polygon points="1069.1,294.8 1097.8,306.6 1124.3,292.9 1089.2,285.4" fill="#3cf0c4"/>
<polygon points="1056.8,289.8 1065.8,293.5 1167.0,246.6 1159.9,243.4" fill="#8ad83a"/>
<polygon points="1062.3,289.4 1066.4,291.1 1096.9,277.0 1093.1,275.4" fill="#f0602a"/>
<polygon points="1102.3,271.3 1105.3,272.5 1125.7,263.2 1122.9,262.0" fill="#f2e020"/>
<polygon points="1131.1,258.2 1133.9,259.4 1160.4,247.3 1157.7,246.1" fill="#f2e020"/>
<polygon points="1056.8,289.8 1065.8,293.5 1070.9,291.1 1062.0,287.5" fill="#2c34d8"/>
<polygon points="1093.9,273.1 1102.3,276.6 1107.3,274.3 1099.1,270.8" fill="#2c34d8"/>
<polygon points="1124.8,259.2 1132.6,262.5 1137.7,260.2 1130.0,256.9" fill="#2c34d8"/>
<polygon points="1157.8,244.3 1165.0,247.5 1170.1,245.2 1163.0,242.0" fill="#2c34d8"/>
<path d="M1075.9 288.8L1107.2 301.7" stroke="#1f7a3a" stroke-width="0.6" opacity="0.5"/>
<path d="M1086.1 284.1L1116.7 296.8" stroke="#1f7a3a" stroke-width="0.6" opacity="0.5"/>
<path d="M1096.2 279.4L1126.1 292.0" stroke="#1f7a3a" stroke-width="0.6" opacity="0.5"/>
<path d="M1106.3 274.7L1135.6 287.1" stroke="#1f7a3a" stroke-width="0.6" opacity="0.5"/>
<path d="M1116.4 270.0L1145.0 282.2" stroke="#1f7a3a" stroke-width="0.6" opacity="0.5"/>
<path d="M1126.5 265.3L1154.5 277.3" stroke="#1f7a3a" stroke-width="0.6" opacity="0.5"/>
<path d="M1136.7 260.6L1164.0 272.4" stroke="#1f7a3a" stroke-width="0.6" opacity="0.5"/>
<path d="M1146.8 256.0L1173.4 267.6" stroke="#1f7a3a" stroke-width="0.6" opacity="0.5"/>
<path d="M1156.9 251.3L1182.8 262.7" stroke="#1f7a3a" stroke-width="0.6" opacity="0.5"/>
<path d="M1069.9 295.2L1170.3 248.0" stroke="#9c3a22" stroke-width="1.2"/>
<path d="M1078.1 298.5L1176.7 250.9" stroke="#9c3a22" stroke-width="1.2"/>
<path d="M1086.3 301.9L1183.2 253.8" stroke="#9c3a22" stroke-width="1.2"/>
<path d="M1094.5 305.3L1189.7 256.6" stroke="#9c3a22" stroke-width="1.2"/>
<polygon points="1065.8,293.5 1097.8,306.6 1102.5,304.2 1070.9,291.1" fill="#3a7ae8"/>
</g>
<path d="M1100.8 304.1L1192.3 258.8" stroke="#3a55b0" stroke-width="1.8" opacity="0.85"/>
<path d="M1056.8 289.8L1094.3 305.2M1097.8 306.6L1244.4 367.0L1400.3 298.4" stroke="#b4d42a" stroke-width="1.6" fill="none"/>
<path d="M1056.8 289.8L1159.9 243.4L1192.3 257.8M1192.3 257.8L1248.3 234.6L1400.3 298.4" stroke="#8fd63a" stroke-width="1.2" fill="none"/>
<g transform="matrix(1 0.424 0 1 1113.5 358.5)"><rect width="107.5" height="72.5" fill="none" stroke="#1a1a00" stroke-width="0.6" opacity="0.55"/></g>
<g transform="matrix(1 0.424 0 1 1113.5 557.8)"><rect width="107.5" height="72.5" fill="none" stroke="#1a1a00" stroke-width="0.6" opacity="0.55"/></g>
<g transform="matrix(1 0.445 0 1 1113.5 358.5)"><rect x="0" y="0" width="107.5" height="72.5" fill="none" stroke="#000" stroke-width="0.6" opacity="0"/><text x="53.5" y="20" font-size="19" textLength="98" lengthAdjust="spacingAndGlyphs" font-family="Liberation Sans, sans-serif" font-weight="bold" text-anchor="middle" fill="#000">0,859 kN/m²</text><text x="53" y="42.5" font-size="19" textLength="66" lengthAdjust="spacingAndGlyphs" font-family="Liberation Sans, sans-serif" font-weight="bold" text-anchor="middle" fill="#000">Cpe:0,60</text><text x="53" y="71.3" font-size="19" textLength="104.5" lengthAdjust="spacingAndGlyphs" font-family="Liberation Sans, sans-serif" font-weight="bold" text-anchor="middle" fill="#000">(D Ön Cephe)</text></g>
<g transform="matrix(1 0.445 0 1 1113.5 557.8)"><rect x="0" y="0" width="107.5" height="72.5" fill="none" stroke="#000" stroke-width="0.6" opacity="0"/><text x="53.5" y="20" font-size="19" textLength="98" lengthAdjust="spacingAndGlyphs" font-family="Liberation Sans, sans-serif" font-weight="bold" text-anchor="middle" fill="#000">0,729 kN/m²</text><text x="53" y="42.5" font-size="19" textLength="66" lengthAdjust="spacingAndGlyphs" font-family="Liberation Sans, sans-serif" font-weight="bold" text-anchor="middle" fill="#000">Cpe:0,60</text><text x="53" y="71.3" font-size="19" textLength="104.5" lengthAdjust="spacingAndGlyphs" font-family="Liberation Sans, sans-serif" font-weight="bold" text-anchor="middle" fill="#000">(D Ön Cephe)</text></g>
<g transform="matrix(1 -0.432 0 1 1302.6 516.2)"><rect x="0" y="0" width="81.3" height="54" fill="none" stroke="#000" stroke-width="0.6" opacity="0.55"/><text x="40.8" y="14.6" font-size="15" textLength="77.5" lengthAdjust="spacingAndGlyphs" font-family="Liberation Sans, sans-serif" font-weight="bold" text-anchor="middle" fill="#000">-1,432 kN/m²</text><text x="40.4" y="31" font-size="15" textLength="54" lengthAdjust="spacingAndGlyphs" font-family="Liberation Sans, sans-serif" font-weight="bold" text-anchor="middle" fill="#000">Cpe:-1,00</text><text x="40.5" y="50" font-size="15" textLength="79" lengthAdjust="spacingAndGlyphs" font-family="Liberation Sans, sans-serif" font-weight="bold" text-anchor="middle" fill="#000">(B Sağ Cephe)</text></g>
<g transform="matrix(1 0.38 0 1 1062.8 363.6)"><rect x="0" y="0" width="28.6" height="20.6" fill="none" stroke="#000" stroke-width="0.5" opacity="0.8"/><text x="14.3" y="5.6" font-size="5" textLength="24" lengthAdjust="spacingAndGlyphs" font-family="Liberation Sans, sans-serif" font-weight="bold" text-anchor="middle" fill="#000">0,859 kN/m²</text><text x="14.3" y="11.6" font-size="5" textLength="17" lengthAdjust="spacingAndGlyphs" font-family="Liberation Sans, sans-serif" font-weight="bold" text-anchor="middle" fill="#000">Cpe:0,60</text><text x="14.3" y="18.2" font-size="5" textLength="27" lengthAdjust="spacingAndGlyphs" font-family="Liberation Sans, sans-serif" font-weight="bold" text-anchor="middle" fill="#000">(D Ön Cephe)</text></g>
<g transform="matrix(1 0.38 0 1 1062.8 562.9000000000001)"><rect x="0" y="0" width="28.6" height="20.6" fill="none" stroke="#000" stroke-width="0.5" opacity="0.8"/><text x="14.3" y="5.6" font-size="5" textLength="24" lengthAdjust="spacingAndGlyphs" font-family="Liberation Sans, sans-serif" font-weight="bold" text-anchor="middle" fill="#000">0,729 kN/m²</text><text x="14.3" y="11.6" font-size="5" textLength="17" lengthAdjust="spacingAndGlyphs" font-family="Liberation Sans, sans-serif" font-weight="bold" text-anchor="middle" fill="#000">Cpe:0,60</text><text x="14.3" y="18.2" font-size="5" textLength="27" lengthAdjust="spacingAndGlyphs" font-family="Liberation Sans, sans-serif" font-weight="bold" text-anchor="middle" fill="#000">(D Ön Cephe)</text></g>
<g transform="matrix(1 -0.41 0 1 1253.5 556.7)"><rect x="0" y="0" width="26.3" height="16.3" fill="none" stroke="#000" stroke-width="0.5" opacity="0.8"/><text x="13.2" y="4.6" font-size="4.3" textLength="21" lengthAdjust="spacingAndGlyphs" font-family="Liberation Sans, sans-serif" font-weight="bold" text-anchor="middle" fill="#000">-2,005 kN/m²</text><text x="13.2" y="9.4" font-size="4.3" textLength="15" lengthAdjust="spacingAndGlyphs" font-family="Liberation Sans, sans-serif" font-weight="bold" text-anchor="middle" fill="#000">Cpe:-1,40</text><text x="13.2" y="15" font-size="4.3" textLength="24" lengthAdjust="spacingAndGlyphs" font-family="Liberation Sans, sans-serif" font-weight="bold" text-anchor="middle" fill="#000">(A Sağ Cephe)</text></g>
<g><path d="M1063.9 772V759.5" stroke="#e8202a" stroke-width="1.6"/><path d="M1061.2 760.5L1063.9 755.6L1066.6 760.5Z" fill="#e8202a"/><path d="M1063.9 773L1056 775.4" stroke="#1a8a1a" stroke-width="2.2"/><path d="M1057.5 772.6L1051.6 776.6L1058.6 778Z" fill="#1a8a1a"/><path d="M1063.9 773L1071.5 775.4" stroke="#1a3af0" stroke-width="2.2"/><path d="M1070.4 772.6L1076 776.8L1069.2 778Z" fill="#1a3af0"/><path d="M1063.9 770.8L1069 774L1063.9 777.4L1058.8 774Z" fill="#f0ee20"/><text x="1062.6" y="754.5" font-family="Liberation Sans, sans-serif" font-size="5.5" fill="#999">Z</text><text x="1049.5" y="777" font-family="Liberation Sans, sans-serif" font-size="5.5" fill="#999">X</text><text x="1076.5" y="777" font-family="Liberation Sans, sans-serif" font-size="5.5" fill="#999">Y</text></g>
</svg>
<svg class="a" style="left:0;top:0;" width="1805" height="914" fill="none">
<!-- toolbar separators -->
<g stroke="#434343" stroke-width="1">
<line x1="129.5" y1="2" x2="129.5" y2="37.5"/><line x1="433.5" y1="2" x2="433.5" y2="37.5"/>
<line x1="699.5" y1="3" x2="699.5" y2="37"/><line x1="985.5" y1="2" x2="985.5" y2="37.5"/>
<line x1="1111.5" y1="6.5" x2="1111.5" y2="32.5"/><line x1="1299.5" y1="2" x2="1299.5" y2="37.5"/>
<line x1="1562.5" y1="2" x2="1562.5" y2="37.5"/>
</g>
<!-- folder -->
<path d="M14.9 14H19.6L21 16H27V19H18.5L15.5 24.8H14.9Z" fill="#c4852f"/>
<path d="M18.9 18.9H30.2L28.2 25H15.6Z" fill="#f19b2f"/>
<!-- save -->
<g fill="#d8d8d8">
<path d="M65 14H66.8V24.2H75.2V14H77V26H65Z"/>
<rect x="66.8" y="19" width="8.4" height="2.3"/>
<rect x="67.8" y="14" width="6" height="3.5"/>
<rect x="67.5" y="22.6" width="7" height="0.7" fill="#8a8a8a"/>
</g>
<rect x="69" y="15" width="1.3" height="1.9" fill="#333"/>
<rect x="70.9" y="15" width="2" height="1.9" fill="#aaa"/>
<!-- printer -->
<g id="prn">
<rect x="137" y="17.3" width="14" height="7.6" rx="1.6" fill="#d8d8d8"/>
<rect x="140.5" y="13.6" width="7" height="4.4" fill="#292929" stroke="#d8d8d8" stroke-width="1.2"/>
<rect x="140.5" y="21.9" width="7" height="4.5" fill="#292929" stroke="#d8d8d8" stroke-width="1.2"/>
</g>
<g>
<rect x="212" y="17.3" width="13.4" height="7.6" rx="1.6" fill="#d8d8d8"/>
<rect x="215.6" y="13.6" width="6.8" height="4.4" fill="#292929" stroke="#d8d8d8" stroke-width="1.2"/>
<rect x="215.6" y="21.9" width="6.8" height="4.5" fill="#292929" stroke="#d8d8d8" stroke-width="1.2"/>
<path d="M226 19.6L220.6 24.4H224L222.4 28.2L228.4 22.8H225Z" fill="#f39c2c" stroke="#292929" stroke-width="0.8"/>
</g>
<!-- page setup -->
<rect x="308.5" y="13.5" width="10.9" height="12.9" rx="0.8" fill="#1c1815" stroke="#d8d8d8" stroke-width="1.2"/>
<g stroke="#0a84e2" stroke-width="1.3"><line x1="311.5" y1="14.2" x2="311.5" y2="25.8"/><line x1="316.6" y1="14.2" x2="316.6" y2="25.8"/><line x1="309.2" y1="16.5" x2="318.8" y2="16.5"/><line x1="309.2" y1="23.4" x2="318.8" y2="23.4"/></g>
<!-- fullscreen -->
<rect x="412.65" y="13.55" width="12.7" height="12.8" rx="0.9" fill="#262626" stroke="#d8d8d8" stroke-width="1.3"/>
<g stroke="#0a84e2" stroke-width="1.5"><line x1="415.6" y1="16.6" x2="422.6" y2="23.6"/></g>
<path d="M414 15.2H418.4L414 19.6Z M424.3 25H419.9L424.3 20.6Z" fill="#0a84e2"/>
<!-- nav -->
<g fill="#0a80e0">
<rect x="442" y="14.6" width="1.8" height="10.7"/><path d="M453.3 14.6V25.3L445 20Z"/>
<path d="M529.2 14.6V25.3L521 20Z"/>
<path d="M626 14.6V25.3L634.4 20Z"/>
<path d="M650.7 14.6V25.3L659 20Z"/><rect x="659.9" y="14.6" width="1.9" height="10.7"/>
</g>
<!-- highlighted compass button -->
<rect x="672" y="2.6" width="26" height="33.5" rx="2.8" fill="#62cefd"/>
<circle cx="684.9" cy="19.9" r="6.6" stroke="#6fb6f3" stroke-width="0.9"/>
<path d="M688.9 16.1L683.3 18.6L686.4 21.8Z" fill="#f8423a"/>
<path d="M681.3 23L683.6 18.8L686.2 21.4Z" fill="#58b4f4"/>
<!-- magnifiers -->
<g stroke="#dcdcdc" stroke-width="1.4" stroke-linecap="round">
<circle cx="712.5" cy="18.5" r="3.9"/><line x1="715.5" y1="21.5" x2="719.6" y2="25.7"/><line x1="710.4" y1="18.5" x2="714.6" y2="18.5" stroke-width="1.2"/>
<circle cx="799.4" cy="18.5" r="3.9"/><line x1="802.4" y1="21.5" x2="806.5" y2="25.7"/>
<circle cx="907.5" cy="18.5" r="3.9"/><line x1="910.5" y1="21.5" x2="914.6" y2="25.7"/><line x1="905.4" y1="18.5" x2="909.6" y2="18.5" stroke-width="1.2"/><line x1="907.5" y1="16.4" x2="907.5" y2="20.6" stroke-width="1.2"/>
</g>
<!-- chevrons -->
<g stroke="#c8c8c8" stroke-width="1" stroke-linecap="round" stroke-linejoin="round">
<path d="M880.4 18.4L884.7 22.7L889 18.4"/><path d="M1093.2 18.4L1097.5 22.7L1101.8 18.4"/>
<path d="M1411.2 18.6L1415.6 23L1420 18.6"/><path d="M1547 18.6L1551.4 23L1555.8 18.6"/>
</g>
<!-- page layout icon -->
<g stroke="#d0d0d0" stroke-width="1">
<path d="M995.5 14.5H1001.5L1004.5 17.5V26.5H995.5Z"/><path d="M1001.5 14.5V17.5H1004.5"/>
<line x1="997.3" y1="19.5" x2="1002.7" y2="19.5"/><line x1="997.3" y1="21.8" x2="1002.7" y2="21.8"/><line x1="997.3" y1="24.1" x2="1002.7" y2="24.1"/>
</g>
<!-- continuous pages icon -->
<g stroke="#d8d8d8" stroke-width="1.1" stroke-linejoin="round">
<path d="M1124.5 14V18.5H1133.5V14"/><path d="M1126.2 14.5H1131.9"/>
<path d="M1124.5 27V20.8H1130.8L1133.5 23.4V27"/><path d="M1130.8 20.8V23.4H1133.5"/><path d="M1126.2 26.5H1131.9"/>
</g>
<!-- disabled pages icon -->
<g stroke="#666" stroke-width="1.1" stroke-linejoin="round">
<path d="M1285.6 12.6H1288.4L1290.3 14.5V18.1H1285.6Z"/>
<path d="M1278.6 20.6H1281.4L1283.3 22.5V26.3H1278.6Z"/>
<path d="M1285.6 20.6H1288.4L1290.3 22.5V26.3H1285.6Z"/>
</g>
<!-- export doc icon -->
<g stroke="#dedede" stroke-width="1.2" stroke-linejoin="round">
<path d="M1310.8 14.7H1316.6L1319.3 17.4V25.3H1310.8Z"/><path d="M1316.6 14.7V17.4H1319.3" stroke-width="0.9"/>
</g>
<g stroke="#2fb055" stroke-width="1.3" stroke-linecap="round" stroke-linejoin="round"><line x1="1308" y1="21.5" x2="1314.8" y2="21.5"/><path d="M1312.6 19.2L1315 21.5L1312.6 23.8"/></g>
<!-- mail -->
<g stroke="#d0d0d0" stroke-width="1">
<rect x="1434.3" y="16.2" width="11.6" height="8.7"/>
<path d="M1434.3 16.2L1440.1 21.2L1445.9 16.2"/><path d="M1434.3 24.9L1438.3 20"/><path d="M1445.9 24.9L1441.9 20"/>
</g>
<!-- params (disabled) -->
<path d="M1570.9 13.9H1573.2V24.7H1579.9V13.9H1582.2V27H1570.9Z" fill="#74532a"/>
<path d="M1575 12.9H1578L1579.1 13.9V15.8H1573.9V13.9Z" fill="#707070"/>
<text x="1576.55" y="23.6" font-family="Liberation Sans, sans-serif" font-size="7" text-anchor="middle" fill="#666">?</text>
<!-- edit fields -->
<g stroke="#0a84e2" stroke-width="1.3" stroke-linejoin="round">
<rect x="1673.6" y="14.5" width="12" height="4" rx="0.9"/>
<rect x="1673.6" y="20.5" width="9" height="4.1" rx="0.9"/>
</g>
<path d="M1682.9 17.8V26.2L1684.9 24.6L1686.3 27.4L1687.7 26.7L1686.3 24H1689.2Z" fill="#d8d8d8" stroke="#292929" stroke-width="0.7"/>
<!-- last hatch icon -->
<rect x="1797.6" y="13.7" width="12" height="12.5" fill="#1f2328" stroke="#d0d0d0" stroke-width="1.2"/>
<g stroke="#1a6cb6" stroke-width="1.5"><line x1="1798.4" y1="18.6" x2="1802.6" y2="14.4"/><line x1="1798.4" y1="22.4" x2="1806.4" y2="14.4"/><line x1="1798.6" y1="25.8" x2="1809" y2="15.4"/><line x1="1802.4" y1="25.8" x2="1810" y2="18.2"/></g>
<!-- tab icons -->
<!-- 3D view icon -->
<path d="M27.85 54.4L22.9 62.8L26.3 62.9Z" fill="#e4e4e4"/>
<path d="M31.5 60.5L35.7 62.4V68.5L34.2 67.8Q35.2 64.5 32.6 62Z" fill="#c4c4c4"/>
<g stroke="#d4d4d4" stroke-width="1" stroke-linejoin="round" stroke-linecap="round">
<path d="M27.85 54.4L31.4 60.4"/>
<circle cx="30" cy="66.7" r="4.3" stroke="#b4b4b4" stroke-width="0.9"/>
<path d="M26.1 64.8A4.3 4.3 0 0 0 31.3 70.9" stroke-width="1.7" stroke="#d8d8d8"/>
<path d="M31.5 60.5L36 57.5L40.5 59.4V65.9L35.7 68.5"/><path d="M31.5 60.5L35.7 62.4L40.5 59.4" stroke="#b0b0b0"/><path d="M35.7 62.4V68.5"/>
</g>
<!-- pins + X in tabs -->
<g stroke="#a0a0a0" stroke-width="0.9" stroke-linecap="round">
<path d="M112.6 60.2L117.2 64.8M115.5 59.8L117.6 61.9M111.3 63.2L114.2 66.1M115.5 59.8L111.3 63.2M117.6 61.9L114.2 66.1M112.7 64.7L110.6 66.8M110.8 59.6L118 66.8"/>
<path d="M252.4 60.2L257 64.8M255.3 59.8L257.4 61.9M251.1 63.2L254 66.1M255.3 59.8L251.1 63.2M257.4 61.9L254 66.1M252.5 64.7L250.4 66.8M250.6 59.6L257.8 66.8"/>
</g>
<g stroke="#b8b8b8" stroke-width="1" stroke-linecap="round">
<path d="M125.6 58.4L134.8 67.6M134.8 58.4L125.6 67.6"/>
<path d="M265.7 58.4L274.9 67.6M274.9 58.4L265.7 67.6"/>
<path d="M280.6 85.4L289.8 94.6M289.8 85.4L280.6 94.6" stroke="#d0d0d0" stroke-width="1.1"/>
<path d="M250.5 124.2L257.9 131.6M257.9 124.2L250.5 131.6" stroke="#c8c8c8"/>
<path d="M272.3 125.3L276.5 129.5L280.7 125.3" stroke="#b8b8b8" fill="none"/>
</g>
<!-- clipboard tab icon -->
<path d="M156 55.9H158.8V68.4H167.3V55.9H170.2V71H156Z" fill="#ec9a36"/>
<rect x="158.8" y="57" width="8.5" height="11.4" fill="#20252b"/>
<path d="M160.8 54.8H165.2L166.2 56V58.5H159.8V56Z" fill="#fff"/>
<rect x="159.8" y="60.7" width="6.4" height="1.2" fill="#e8e8e8"/>
<rect x="159.8" y="62.9" width="6.4" height="1.1" fill="#f0f0f0"/>
<rect x="159.8" y="65" width="6.4" height="1.6" fill="#bdbdbd"/>
<!-- panel pin -->
<g stroke="#c4c4c4" stroke-width="1" stroke-linejoin="round" stroke-linecap="round">
<path d="M265.4 85.3L269.7 89.6L267.5 90.5L266.1 94.5L260.2 89.8L263.8 88.3Z"/><path d="M262.6 92.4L259.2 95.8"/>
</g>
<!-- tree expanders -->
<g fill="#b4b4b4">
<path d="M32 186.7V193H25Z"/><path d="M52 210.7V217H45Z"/><path d="M72 234.7V241H65Z"/><path d="M92 306.7V313H85Z"/>
<path d="M72 618.7V625H65Z"/><path d="M72 738.7V745H65Z"/>
</g>
</svg>


<!-- text layer -->
<span class="t f" style="left:36.0px;top:13.0px;font-size:12px;line-height:17px;letter-spacing:-0.508px;color:#fff;">Aç</span>
<span class="t f" style="left:85.4px;top:13.0px;font-size:12px;line-height:17px;letter-spacing:-0.293px;color:#fff;">Kaydet</span>
<span class="t f" style="left:158.0px;top:13.0px;font-size:12px;line-height:17px;letter-spacing:-0.349px;color:#fff;">Yazdır...</span>
<span class="t f" style="left:234.4px;top:13.0px;font-size:12px;line-height:17px;letter-spacing:-0.277px;color:#fff;">Hızlı Yazdır</span>
<span class="t f" style="left:328.0px;top:13.0px;font-size:12px;line-height:17px;letter-spacing:-0.470px;color:#fff;">Sayfa yapısı...</span>
<span class="t f" style="left:462.0px;top:13.0px;font-size:12px;line-height:17px;letter-spacing:-0.224px;color:#fff;">İlk sayfa</span>
<span class="t f" style="left:540.0px;top:13.0px;font-size:12px;line-height:17px;letter-spacing:-0.281px;color:#fff;">Önceki sayfa</span>
<span class="t f" style="left:728.3px;top:13.0px;font-size:12px;line-height:17px;letter-spacing:-0.264px;color:#fff;">Uzaklaştır</span>
<span class="t f" style="left:817.0px;top:13.0px;font-size:12px;line-height:17px;letter-spacing:-0.256px;color:#fff;">Yakınlaştır</span>
<span class="t f" style="left:923.0px;top:13.0px;font-size:12px;line-height:17px;letter-spacing:-0.192px;color:#fff;">Yakınlaştır</span>
<span class="t f" style="left:1015.6px;top:13.0px;font-size:12px;line-height:17px;letter-spacing:-0.273px;color:#fff;">Sayfa Düzeni</span>
<span class="t f" style="left:1143.0px;top:13.0px;font-size:12px;line-height:17px;letter-spacing:-0.182px;color:#fff;">Sayfaları Sürekli göster</span>
<span class="t f" style="left:1330.4px;top:13.0px;font-size:12px;line-height:17px;letter-spacing:-0.100px;color:#fff;">Belge Oluştur</span>
<span class="t f" style="left:1456.5px;top:13.0px;font-size:12px;line-height:17px;letter-spacing:-0.040px;color:#fff;">E-posta gönder</span>
<span class="t f" style="left:1591.0px;top:13.0px;font-size:12px;line-height:17px;letter-spacing:-0.147px;color:#6e6e6e;">Parametreler</span>
<span class="t f" style="left:1695.0px;top:13.0px;font-size:12px;line-height:17px;letter-spacing:-0.129px;color:#fff;">Alanları Düzenle</span>
<span class="t f" style="left:44.0px;top:55.9px;font-size:12px;line-height:17px;letter-spacing:-0.398px;color:#fff;">3D Bakış</span>
<span class="t f" style="left:175.3px;top:55.9px;font-size:12px;line-height:17px;letter-spacing:-0.627px;color:#fff;">YAPI BİLGİ</span>
<span class="t f" style="left:10.5px;top:81.8px;font-size:12.5px;line-height:18px;letter-spacing:-0.310px;color:#d6d6d6;font-weight:bold;">Gezinti</span>
<span class="t f" style="left:24.0px;top:121.5px;font-size:12px;line-height:17px;letter-spacing:0.033px;color:#c8c8c8;">aramak için metni girin</span>
<span class="t f" style="left:15.4px;top:148.2px;font-size:12px;line-height:17px;letter-spacing:-0.046px;color:#fff;font-weight:bold;">Doküman Haritası</span>
<span class="t f" style="left:131.0px;top:148.2px;font-size:12px;line-height:17px;letter-spacing:-0.379px;color:#fff;">Sayfalar</span>
<span class="t f" style="left:190.0px;top:148.2px;font-size:12px;line-height:17px;letter-spacing:-0.172px;color:#fff;">Arama sonuçları</span>
<span class="t f" style="left:45.0px;top:183.3px;font-size:12px;line-height:17px;letter-spacing:-0.338px;color:#fff;">Rapor</span>
<span class="t f" style="left:65.0px;top:207.3px;font-size:12px;line-height:17px;letter-spacing:-0.577px;color:#fff;">YAPI BİLGİ</span>
<span class="t f" style="left:85.0px;top:231.3px;font-size:12px;line-height:17px;letter-spacing:-0.644px;color:#fff;">YAPI YÜK BİLGİSİ</span>
<span class="t f" style="left:105.0px;top:255.3px;font-size:12px;line-height:17px;letter-spacing:-0.163px;color:#fff;">Yüklemeler</span>
<span class="t f" style="left:105.0px;top:279.3px;font-size:12px;line-height:17px;letter-spacing:-0.075px;color:#fff;">Kombinasyonlar</span>
<span class="t f" style="left:105.0px;top:303.3px;font-size:12px;line-height:17px;letter-spacing:-0.481px;color:#fff;">OTOMATİK YÜKLER (Kar Rüzgar..)</span>
<span class="t f" style="left:125.0px;top:327.3px;font-size:12px;line-height:17px;letter-spacing:-0.243px;color:#fff;">Sn6 (En 1991-1-3)</span>
<span class="t f" style="left:125.0px;top:351.3px;font-size:12px;line-height:17px;letter-spacing:-0.290px;color:#fff;">W_0(Cpi:0,20) (En 1991-1-4)</span>
<span class="t f" style="left:125.0px;top:375.3px;font-size:12px;line-height:17px;letter-spacing:-0.286px;color:#fff;">W_90(Cpi:0,20) (En 1991-1-4)</span>
<span class="t f" style="left:125.0px;top:399.3px;font-size:12px;line-height:17px;letter-spacing:-0.346px;color:#fff;">W_180(Cpi:0,20) (En 1991-1...</span>
<span class="t f" style="left:125.0px;top:423.3px;font-size:12px;line-height:17px;letter-spacing:-0.346px;color:#fff;">W_270(Cpi:0,20) (En 1991-1...</span>
<span class="t f" style="left:125.0px;top:447.3px;font-size:12px;line-height:17px;letter-spacing:-0.255px;color:#fff;">W_0(Cpi:-0,30) (En 1991-1-4)</span>
<span class="t f" style="left:125.0px;top:471.3px;font-size:12px;line-height:17px;letter-spacing:-0.282px;color:#fff;">W_90(Cpi:-0,30) (En 1991-1-...</span>
<span class="t f" style="left:125.0px;top:495.3px;font-size:12px;line-height:17px;letter-spacing:-0.274px;color:#fff;">W_180(Cpi:-0,30) (En 1991-...</span>
<span class="t f" style="left:125.0px;top:519.3px;font-size:12px;line-height:17px;letter-spacing:-0.274px;color:#fff;">W_270(Cpi:-0,30) (En 1991-...</span>
<span class="t f" style="left:85.0px;top:543.3px;font-size:12px;line-height:17px;letter-spacing:-0.953px;color:#fff;">ENKESİT ÖZELLİKLERİ</span>
<span class="t f" style="left:85.0px;top:567.3px;font-size:12px;line-height:17px;letter-spacing:-0.788px;color:#fff;">MALZEME ÖZELLİKLERİ</span>
<span class="t f" style="left:85.0px;top:591.3px;font-size:12px;line-height:17px;letter-spacing:-0.430px;color:#fff;">DÜĞÜM NOKTASI BİLGİ</span>
<span class="t f" style="left:85.0px;top:615.3px;font-size:12px;line-height:17px;letter-spacing:-0.749px;color:#fff;">ÇUBUK ELEMANLAR</span>
<span class="t f" style="left:105.0px;top:639.3px;font-size:12px;line-height:17px;letter-spacing:-0.910px;color:#fff;">ÇUBUK LİSTESİ</span>
<span class="t f" style="left:105.0px;top:663.3px;font-size:12px;line-height:17px;letter-spacing:-0.822px;color:#fff;">ÇUBUK ELASTİK BAĞ</span>
<span class="t f" style="left:105.0px;top:687.3px;font-size:12px;line-height:17px;letter-spacing:-0.606px;color:#fff;">ÇUBUK YAYILI YÜK BİLGİSİ</span>
<span class="t f" style="left:105.0px;top:711.3px;font-size:12px;line-height:17px;letter-spacing:-0.725px;color:#fff;">ÇUBUK TEKİL YÜK BİLGİSİ</span>
<span class="t f" style="left:85.0px;top:735.3px;font-size:12px;line-height:17px;letter-spacing:-0.809px;color:#fff;">YÜZEY ELEMANLAR</span>
<span class="t f" style="left:105.0px;top:759.3px;font-size:12px;line-height:17px;letter-spacing:-0.790px;color:#fff;">YÜZEY YÜK BİLGİSİ</span>
<span class="t f" style="left:85.0px;top:783.3px;font-size:12px;line-height:17px;letter-spacing:-0.742px;color:#fff;">YAPI YERLEŞİM PLANLARI</span>
<span class="t r" style="left:709.7px;top:113.3px;font-size:12px;line-height:17px;letter-spacing:-0.077px;color:#000;font-weight:bold;">LİSANS</span>
<span class="t r" style="left:709.7px;top:129.5px;font-size:12px;line-height:17px;letter-spacing:-0.309px;color:#000;font-weight:bold;">PROJE</span>
<span class="t r" style="left:709.7px;top:145.7px;font-size:12px;line-height:17px;letter-spacing:-0.104px;color:#000;font-weight:bold;">PROGRAM</span>
<span class="t r" style="left:709.7px;top:162.2px;font-size:12px;line-height:17px;letter-spacing:0.169px;color:#000;font-weight:bold;">TARİH</span>
<span class="t r" style="left:860.0px;top:113.8px;font-size:12px;line-height:17px;letter-spacing:0.000px;color:#000;">:</span>
<span class="t r" style="left:860.0px;top:130.0px;font-size:12px;line-height:17px;letter-spacing:0.000px;color:#000;">:</span>
<span class="t r" style="left:860.0px;top:146.2px;font-size:12px;line-height:17px;letter-spacing:0.000px;color:#000;">:</span>
<span class="t r" style="left:860.0px;top:162.7px;font-size:12px;line-height:17px;letter-spacing:0.000px;color:#000;">:</span>
<span class="t r" style="left:872.4px;top:113.3px;font-size:12px;line-height:17px;letter-spacing:0.127px;color:#000;">STA MUH.MUS.LTD.STI.-YTU TEKNOPARK</span>
<span class="t r" style="left:872.4px;top:129.5px;font-size:12px;line-height:17px;letter-spacing:-0.031px;color:#000;">STAsteel Proje</span>
<span class="t r" style="left:872.4px;top:145.7px;font-size:12px;line-height:17px;letter-spacing:0.407px;color:#000;">STASteel 3.2.1</span>
<span class="t r" style="left:872.4px;top:160.7px;font-size:12px;line-height:17px;letter-spacing:-0.122px;color:#000;">13 Şubat 2026 Cum</span>
<span class="t r" style="left:595.2px;top:208.9px;font-size:13.33px;line-height:19px;letter-spacing:-0.079px;color:#000;font-weight:bold;">W_180(Cpi:0,20) (En 1991-1-4)</span>
<span class="t r" style="left:596.2px;top:236.3px;font-size:12px;line-height:17px;letter-spacing:0.000px;color:#000;font-weight:bold;">Vb (m/s)</span>
<span class="t r" style="left:708.2px;top:236.3px;font-size:12px;line-height:17px;letter-spacing:0.000px;color:#000;font-weight:bold;">:</span>
<span class="t r" style="left:718.2px;top:236.3px;font-size:12px;line-height:17px;letter-spacing:0.000px;color:#000;">30,00</span>
<span class="t r" style="left:596.2px;top:258.3px;font-size:12px;line-height:17px;letter-spacing:0.000px;color:#000;font-weight:bold;">c0</span>
<span class="t r" style="left:708.2px;top:258.3px;font-size:12px;line-height:17px;letter-spacing:0.000px;color:#000;font-weight:bold;">:</span>
<span class="t r" style="left:718.2px;top:258.3px;font-size:12px;line-height:17px;letter-spacing:0.000px;color:#000;">1,00</span>
<span class="t r" style="left:596.2px;top:280.4px;font-size:12px;line-height:17px;letter-spacing:0.000px;color:#000;font-weight:bold;">CsCd</span>
<span class="t r" style="left:708.2px;top:280.4px;font-size:12px;line-height:17px;letter-spacing:0.000px;color:#000;font-weight:bold;">:</span>
<span class="t r" style="left:718.2px;top:280.4px;font-size:12px;line-height:17px;letter-spacing:0.000px;color:#000;">1,00</span>
<span class="t r" style="left:596.2px;top:302.4px;font-size:12px;line-height:17px;letter-spacing:0.000px;color:#000;font-weight:bold;">Cpi</span>
<span class="t r" style="left:708.2px;top:302.4px;font-size:12px;line-height:17px;letter-spacing:0.000px;color:#000;font-weight:bold;">:</span>
<span class="t r" style="left:718.2px;top:302.4px;font-size:12px;line-height:17px;letter-spacing:0.000px;color:#000;">0,20</span>
<span class="t r" style="left:596.2px;top:324.4px;font-size:12px;line-height:17px;letter-spacing:0.000px;color:#000;font-weight:bold;">kl</span>
<span class="t r" style="left:708.2px;top:324.4px;font-size:12px;line-height:17px;letter-spacing:0.000px;color:#000;font-weight:bold;">:</span>
<span class="t r" style="left:718.2px;top:324.4px;font-size:12px;line-height:17px;letter-spacing:0.000px;color:#000;">1,00</span>
<span class="t r" style="left:596.2px;top:346.4px;font-size:12px;line-height:17px;letter-spacing:0.000px;color:#000;font-weight:bold;">Yükleme varyasyonu</span>
<span class="t r" style="left:708.2px;top:346.4px;font-size:12px;line-height:17px;letter-spacing:0.000px;color:#000;font-weight:bold;">:</span>
<span class="t r" style="left:718.2px;top:346.4px;font-size:12px;line-height:17px;letter-spacing:0.000px;color:#000;">3</span>
<span class="t r" style="left:596.2px;top:368.5px;font-size:12px;line-height:17px;letter-spacing:0.000px;color:#000;font-weight:bold;">Rho</span>
<span class="t r" style="left:708.2px;top:368.5px;font-size:12px;line-height:17px;letter-spacing:0.000px;color:#000;font-weight:bold;">:</span>
<span class="t r" style="left:718.2px;top:368.5px;font-size:12px;line-height:17px;letter-spacing:0.000px;color:#000;">1,25</span>
<span class="t r" style="left:596.2px;top:390.5px;font-size:12px;line-height:17px;letter-spacing:0.000px;color:#000;font-weight:bold;">Arazi kategorisi</span>
<span class="t r" style="left:708.2px;top:390.5px;font-size:12px;line-height:17px;letter-spacing:0.000px;color:#000;font-weight:bold;">:</span>
<span class="t r" style="left:718.2px;top:390.5px;font-size:12px;line-height:17px;letter-spacing:0.000px;color:#000;">III</span>
<span class="t r" style="left:596.2px;top:412.5px;font-size:12px;line-height:17px;letter-spacing:0.000px;color:#000;font-weight:bold;">Rüzgar yönü açısı (°)</span>
<span class="t r" style="left:708.2px;top:412.5px;font-size:12px;line-height:17px;letter-spacing:0.000px;color:#000;font-weight:bold;">:</span>
<span class="t r" style="left:718.2px;top:412.5px;font-size:12px;line-height:17px;letter-spacing:0.000px;color:#000;">180,00</span>
<span class="t r" style="left:1578.0px;top:803.9px;font-size:13.33px;line-height:19px;letter-spacing:-0.098px;color:#000;">33/1602</span>
</body></html>
